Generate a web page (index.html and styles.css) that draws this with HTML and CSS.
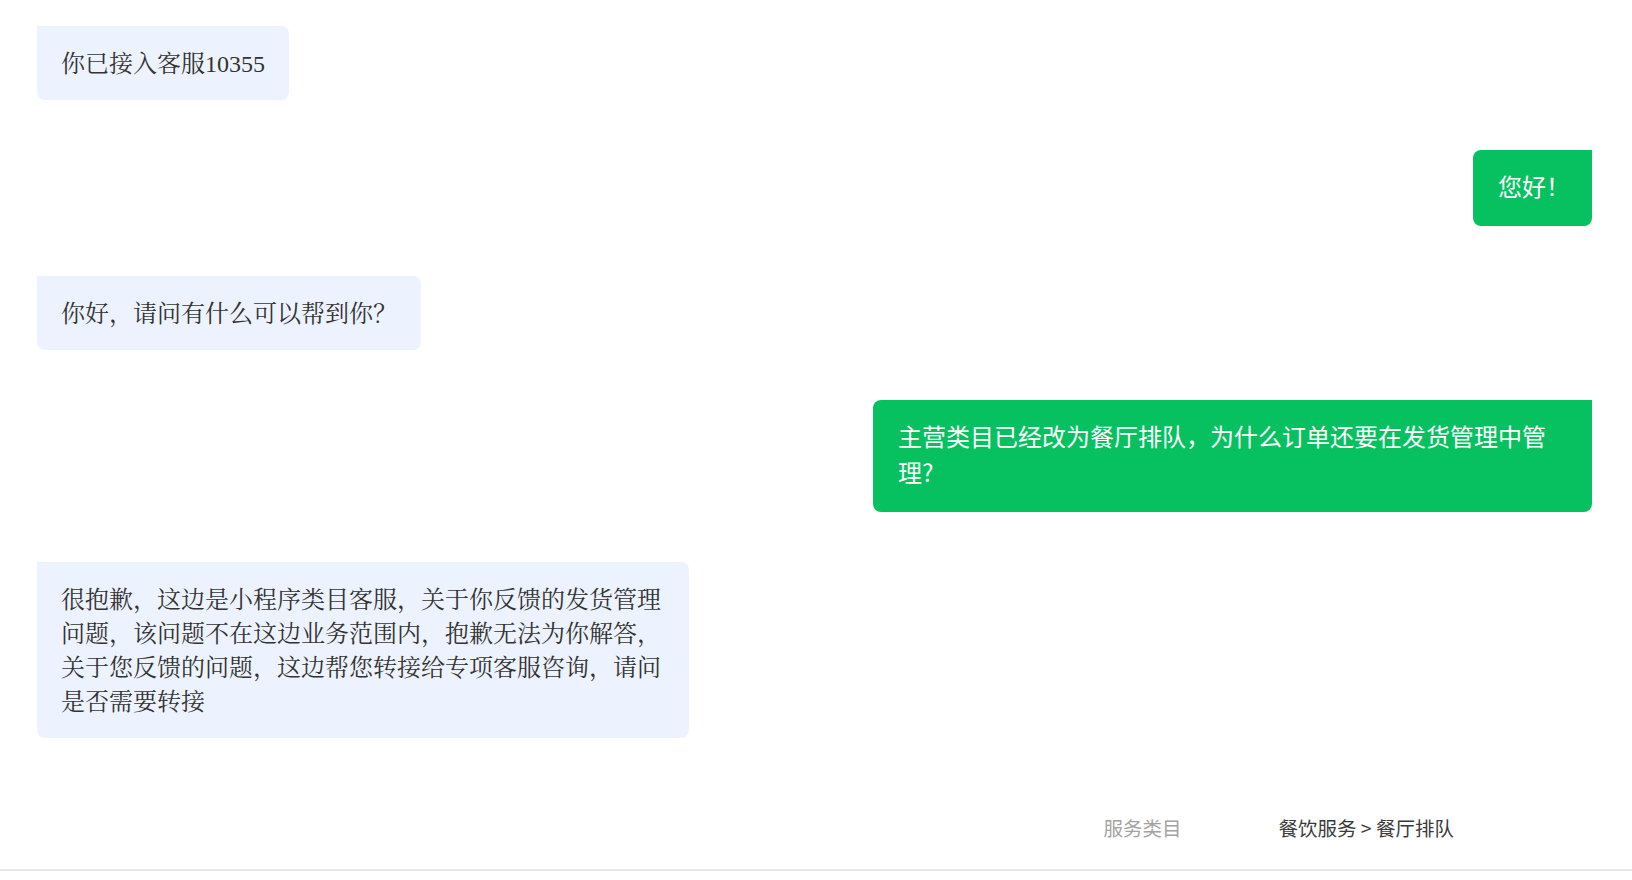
FILE: index.html
```html
<!DOCTYPE html>
<html lang="zh-CN">
<head>
<meta charset="utf-8">
<title>客服对话</title>
<link rel="stylesheet" href="styles.css">
</head>
<body>
<div class="page">
  <div class="chat">
    <div class="row left"><div class="bubble grey">你已接入客服10355</div></div>
    <div class="row right"><div class="bubble green short">您好！</div></div>
    <div class="row left"><div class="bubble grey">你好，请问有什么可以帮到你？</div></div>
    <div class="row right"><div class="bubble green">主营类目已经改为餐厅排队，为什么订单还要在发货管理中管理?</div></div>
    <div class="row left"><div class="bubble grey">很抱歉，这边是小程序类目客服，关于你反馈的发货管理问题，该问题不在这边业务范围内，抱歉无法为你解答，关于您反馈的问题，这边帮您转接给专项客服咨询，请问是否需要转接</div></div>
  </div>
  <div class="footer">
    <span class="label">服务类目</span>
    <span class="value">餐饮服务 &gt; 餐厅排队</span>
  </div>
</div>
</body>
</html>
```

FILE: styles.css
```css
* { box-sizing: border-box; }
html, body { margin: 0; padding: 0; background: #ffffff; }
body { font-family: "Noto Sans CJK SC", "Noto Sans", sans-serif; }
.page { width: 1632px; }
.chat {
  display: flex;
  flex-direction: column;
  gap: 50px;
  padding: 26px 40px 0 37px;
}
.row { display: flex; }
.row.left { justify-content: flex-start; }
.row.right { justify-content: flex-end; }
.bubble {
  font-size: 24px;
  padding: 20px 24px;
  word-break: break-all;
}
.bubble.grey {
  max-width: 652px;
  background: #edf3fe;
  color: #333333;
  line-height: 34px;
  padding-top: 21px;
  padding-bottom: 19px;
  border-radius: 0 8px 8px 8px;
  font-family: "Liberation Serif", "Noto Serif CJK SC", "Noto Sans CJK SC", serif;
}
.bubble.green {
  max-width: 719px;
  background: #07c160;
  color: #ffffff;
  line-height: 36px;
  padding: 18px 24px 22px 25px;
  border-radius: 8px 0 8px 8px;
}
.bubble.green.short { padding-right: 22px; }
.footer {
  display: flex;
  justify-content: flex-end;
  align-items: center;
  margin-top: 64px;
  height: 50px;
  margin-bottom: 19px;
  padding-right: 178px;
  font-size: 19.5px;
  position: relative;
}
.footer::after {
  content: "";
  position: absolute;
  left: 0;
  right: 0;
  bottom: -19px;
  height: 2px;
  background: #e3e7eb;
}
.footer .label { width: 175px; color: #a3a3a3; }
.footer .value { color: #3a3a3a; }
```
